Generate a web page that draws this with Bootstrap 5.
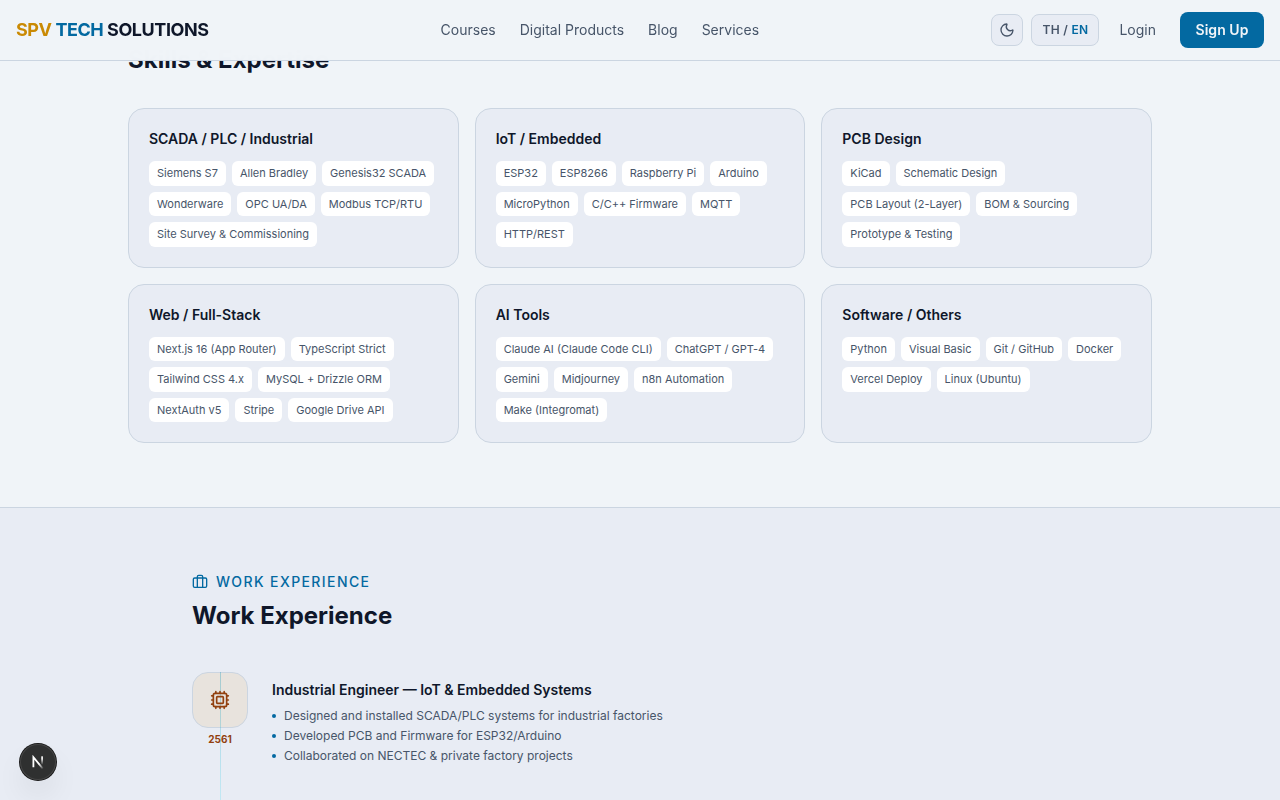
<!DOCTYPE html>
<html lang="en">
<head>
<meta charset="utf-8">
<meta name="viewport" content="width=device-width, initial-scale=1">
<title>SPV Tech Solutions</title>
<link href="https://cdn.jsdelivr.net/npm/bootstrap@5.3.0/dist/css/bootstrap.min.css" rel="stylesheet">
<style>
  :root { --ink: #0f172a; --soft: #475569; --line: #cbd5e1; --brand: #0369a1; --page: #f0f4f8; --panel: #e8ecf4; }
  body { font-family: Inter, "Liberation Sans", sans-serif; background: var(--page); color: var(--ink); height: 800px; overflow: hidden; }
  .topbar { height: 61px; background: rgba(240,244,248,.99); backdrop-filter: blur(12px); border-bottom: 1px solid var(--line); }
  .logo { font-size: 18px; line-height: 28px; font-weight: 700; letter-spacing: -.45px; color: var(--ink); width: 424.6px; }
  .gold { color: #ca8a04; }
  .brand { color: var(--brand); }
  .topbar a { text-decoration: none; }
  .menu-link { font-size: 14px; line-height: 20px; color: var(--soft); }
  .chip-btn { height: 32px; border: 1px solid var(--line); border-radius: 8px; background: var(--panel); color: var(--soft); font-size: 12px; line-height: 16px; font-weight: 600; }
  .theme-btn { width: 32px; }
  .lang-btn { width: 68px; letter-spacing: .3px; }
  .signup { height: 36px; width: 84px; border-radius: 8px; background: var(--brand); color: #f0f4f8; font-size: 14px; line-height: 20px; font-weight: 600; padding-bottom: 1px; letter-spacing: .05px; }
  .skills { width: 1024px; padding-top: 44px; padding-bottom: 64px; }
  .section-title { font-size: 24px; line-height: 32px; font-weight: 700; }
  .skill-grid { display: grid; grid-template-columns: repeat(3, 1fr); gap: 16px; }
  .skill-card { border: 1px solid var(--line); border-radius: 16px; background: var(--panel); padding: 20px; }
  .item-title { font-size: 14px; line-height: 20px; font-weight: 600; }
  .tags { gap: 6px; }
  .tag { font-size: 11px; line-height: 16.5px; padding: 4px 8px; border-radius: 6px; background: #fff; color: var(--soft); }
  .work { background: var(--panel); border-top: 1px solid var(--line); padding-top: 64px; min-height: 0; }
  .work-inner { width: 896px; }
  .eyebrow { font-size: 14px; line-height: 20px; font-weight: 500; letter-spacing: 1.4px; color: var(--brand); }
  .timeline-line { left: 28px; top: 0; bottom: 0; width: 1px; background: linear-gradient(to bottom, #0891b24d, #22d3ee33 120px); }
  .stop { width: 56px; }
  .stop-icon { width: 56px; height: 56px; border: 1px solid var(--line); border-radius: 16px; background: #e8e3dd; color: #92400e; }
  .year { font-size: 10px; line-height: 15px; font-weight: 700; color: #92400e; }
  .points { font-size: 12px; line-height: 16px; color: var(--soft); }
  .points li { display: flex; align-items: center; gap: 8px; margin-bottom: 4px; }
  .points li::before { content: ""; width: 4px; height: 4px; border-radius: 50%; background: var(--brand); }
  .dev-badge { position: fixed; left: 20px; bottom: 20px; width: 36px; height: 36px; border-radius: 50%; background: #2f3030; box-shadow: 0 0 0 1px #171717, inset 0 0 0 1px #454545, 0 16px 32px -8px rgba(0,0,0,.2); }
</style>
</head>
<body class="d-flex flex-column">
<header class="topbar fixed-top d-flex align-items-center justify-content-between px-3">
  <a href="#" class="logo"><span class="gold">SPV</span> <span class="brand">TECH</span> SOLUTIONS</a>
  <nav class="d-flex flex-grow-1 gap-4">
    <a href="#" class="menu-link">Courses</a>
    <a href="#" class="menu-link">Digital Products</a>
    <a href="#" class="menu-link">Blog</a>
    <a href="#" class="menu-link">Services</a>
  </nav>
  <div class="d-flex align-items-center gap-2">
    <button class="chip-btn theme-btn d-flex align-items-center justify-content-center p-0" aria-label="Theme">
      <svg width="16" height="16" viewBox="0 0 24 24" fill="none" stroke="currentColor" stroke-width="2" stroke-linecap="round" stroke-linejoin="round"><path d="M20.985 12.486a9 9 0 1 1-9.473-9.472c.405-.022.617.46.402.803a6 6 0 0 0 8.268 8.268c.344-.215.825-.004.803.401"/></svg>
    </button>
    <button class="chip-btn lang-btn p-0">TH / <span class="brand">EN</span></button>
    <a href="#" class="menu-link px-2 ms-1">Login</a>
    <a href="#" class="signup d-flex align-items-center justify-content-center ms-2">Sign Up</a>
  </div>
</header>

<section class="skills mx-auto flex-shrink-0">
  <h2 class="section-title mb-0 pb-2">Skills &amp; Expertise</h2>
  <div class="skill-grid mt-4">
    <div class="skill-card">
      <h3 class="item-title mb-0">SCADA / PLC / Industrial</h3>
      <div class="tags d-flex flex-wrap mt-2 pt-1"><span class="tag">Siemens S7</span><span class="tag">Allen Bradley</span><span class="tag">Genesis32 SCADA</span><span class="tag">Wonderware</span><span class="tag">OPC UA/DA</span><span class="tag">Modbus TCP/RTU</span><span class="tag">Site Survey &amp; Commissioning</span></div>
    </div>
    <div class="skill-card">
      <h3 class="item-title mb-0">IoT / Embedded</h3>
      <div class="tags d-flex flex-wrap mt-2 pt-1"><span class="tag">ESP32</span><span class="tag">ESP8266</span><span class="tag">Raspberry Pi</span><span class="tag">Arduino</span><span class="tag">MicroPython</span><span class="tag">C/C++ Firmware</span><span class="tag">MQTT</span><span class="tag">HTTP/REST</span></div>
    </div>
    <div class="skill-card">
      <h3 class="item-title mb-0">PCB Design</h3>
      <div class="tags d-flex flex-wrap mt-2 pt-1"><span class="tag">KiCad</span><span class="tag">Schematic Design</span><span class="tag">PCB Layout (2-Layer)</span><span class="tag">BOM &amp; Sourcing</span><span class="tag">Prototype &amp; Testing</span></div>
    </div>
    <div class="skill-card">
      <h3 class="item-title mb-0">Web / Full-Stack</h3>
      <div class="tags d-flex flex-wrap mt-2 pt-1"><span class="tag">Next.js 16 (App Router)</span><span class="tag">TypeScript Strict</span><span class="tag">Tailwind CSS 4.x</span><span class="tag">MySQL + Drizzle ORM</span><span class="tag">NextAuth v5</span><span class="tag">Stripe</span><span class="tag">Google Drive API</span></div>
    </div>
    <div class="skill-card">
      <h3 class="item-title mb-0">AI Tools</h3>
      <div class="tags d-flex flex-wrap mt-2 pt-1"><span class="tag">Claude AI (Claude Code CLI)</span><span class="tag">ChatGPT / GPT-4</span><span class="tag">Gemini</span><span class="tag">Midjourney</span><span class="tag">n8n Automation</span><span class="tag">Make (Integromat)</span></div>
    </div>
    <div class="skill-card">
      <h3 class="item-title mb-0">Software / Others</h3>
      <div class="tags d-flex flex-wrap mt-2 pt-1"><span class="tag">Python</span><span class="tag">Visual Basic</span><span class="tag">Git / GitHub</span><span class="tag">Docker</span><span class="tag">Vercel Deploy</span><span class="tag">Linux (Ubuntu)</span></div>
    </div>
  </div>
</section>

<section class="work d-flex flex-column flex-fill overflow-hidden">
  <div class="work-inner mx-auto d-flex flex-column flex-fill">
    <div class="eyebrow d-flex align-items-center gap-2 mb-2">
      <svg width="16" height="16" viewBox="0 0 24 24" fill="none" stroke="currentColor" stroke-width="2" stroke-linecap="round" stroke-linejoin="round"><path d="M8 20V4a2 2 0 0 1 2-2h4a2 2 0 0 1 2 2v16"/><rect x="2" y="6" width="20" height="14" rx="2"/></svg>
      <span>WORK EXPERIENCE</span>
    </div>
    <h2 class="section-title mb-0">Work Experience</h2>
    <div class="position-relative d-flex flex-fill gap-4 mt-3 pt-4">
      <div class="stop d-flex flex-column align-items-center">
        <div class="stop-icon d-flex align-items-center justify-content-center">
          <svg class="position-relative z-1" width="20" height="20" viewBox="0 0 24 24" fill="none" stroke="currentColor" stroke-width="2" stroke-linecap="round" stroke-linejoin="round"><path d="M12 20v2M12 2v2M17 20v2M17 2v2M2 12h2M2 17h2M2 7h2M20 12h2M20 17h2M20 7h2M7 20v2M7 2v2"/><rect x="4" y="4" width="16" height="16" rx="2"/><rect x="8" y="8" width="8" height="8" rx="1"/></svg>
        </div>
        <div class="year mt-1">2561</div>
      </div>
      <div class="pt-2">
        <h3 class="item-title mb-2">Industrial Engineer — IoT &amp; Embedded Systems</h3>
        <ul class="points list-unstyled mb-0"><li>Designed and installed SCADA/PLC systems for industrial factories</li><li>Developed PCB and Firmware for ESP32/Arduino</li><li>Collaborated on NECTEC &amp; private factory projects</li></ul>
      </div>
      <div class="timeline-line position-absolute mt-4"></div>
    </div>
  </div>
</section>

<div class="dev-badge d-flex align-items-center justify-content-center">
  <svg width="14" height="14" viewBox="0 0 14 14" fill="none">
    <defs><linearGradient id="fade" x1="0" y1="0" x2="0" y2="1"><stop offset=".3" stop-color="#fff"/><stop offset="1" stop-color="#fff" stop-opacity="0"/></linearGradient><linearGradient id="tail" x1="0" y1="0" x2="1" y2="1"><stop offset=".6" stop-color="#fff"/><stop offset="1" stop-color="#fff" stop-opacity=".1"/></linearGradient></defs>
    <path d="M2.4 12.2V2.2L11.8 13.6" stroke="url(#tail)" stroke-width="1.8"/>
    <rect x="10.3" y="1.3" width="1.6" height="8.5" fill="url(#fade)"/>
  </svg>
</div>
<script src="https://cdn.jsdelivr.net/npm/bootstrap@5.3.0/dist/js/bootstrap.bundle.min.js"></script>
</body>
</html>
